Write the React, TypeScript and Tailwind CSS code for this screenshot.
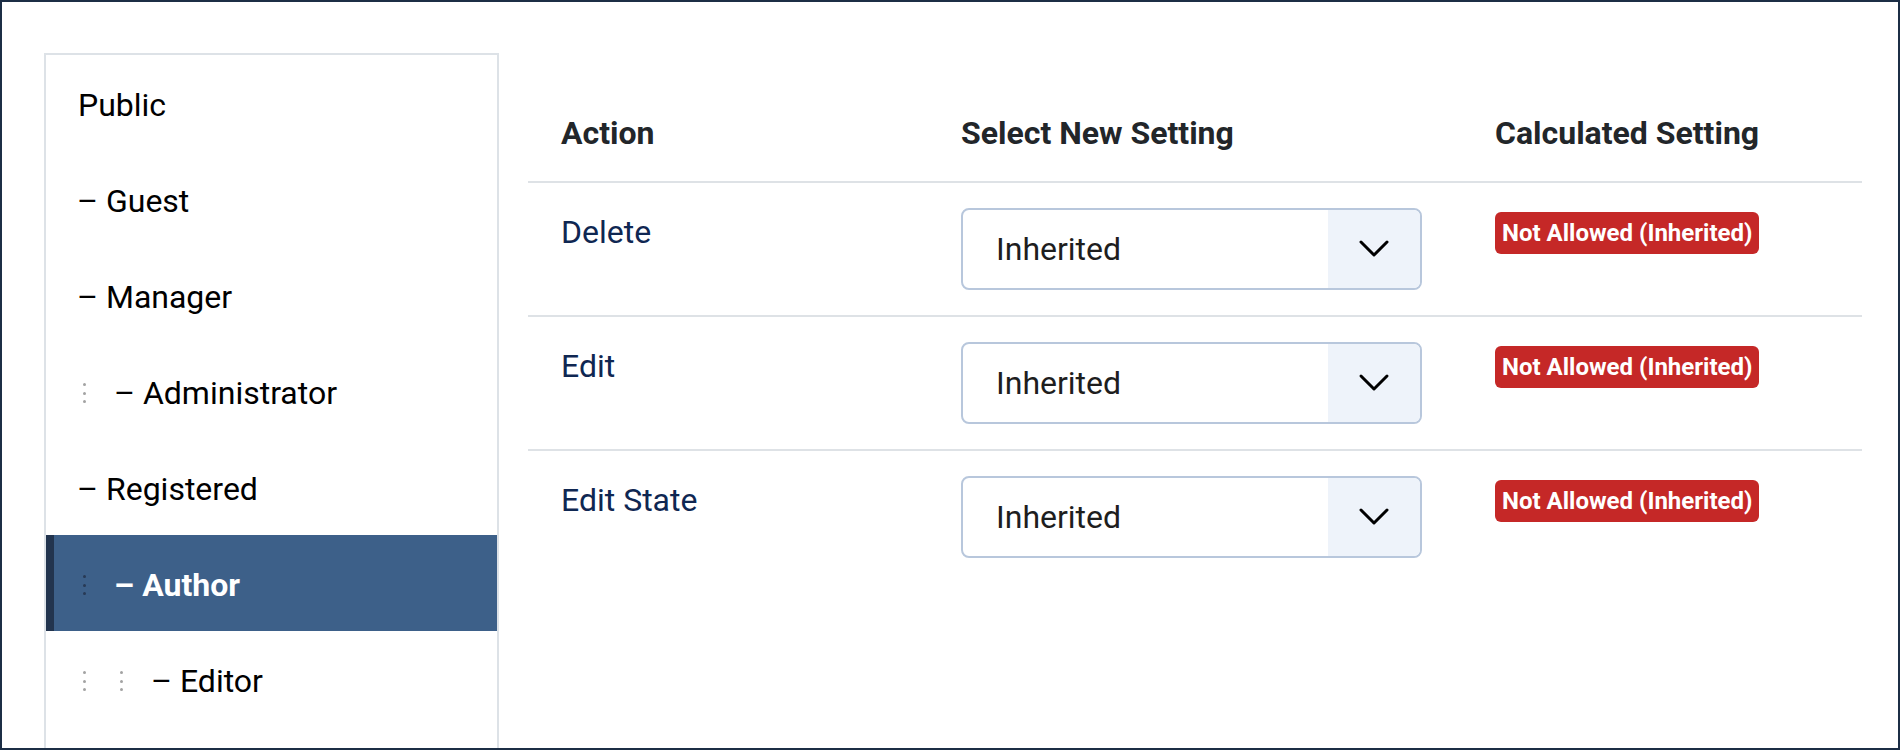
import React from "react";

type Group = { name: string; level: number; active?: boolean };

const GROUPS: Group[] = [
  { name: "Public", level: 0 },
  { name: "Guest", level: 1 },
  { name: "Manager", level: 1 },
  { name: "Administrator", level: 2 },
  { name: "Registered", level: 1 },
  { name: "Author", level: 2, active: true },
  { name: "Editor", level: 3 },
];

const ACTIONS = ["Delete", "Edit", "Edit State"];

function Dots({ active }: { active?: boolean }) {
  const dot = active ? "bg-[#283a55]" : "bg-[#a3a3a3]";
  return (
    <span className="w-[37px] shrink-0 flex items-center">
      <span className="ml-[5px] flex flex-col gap-[5.5px]">
        <span className={`block w-[3px] h-[3px] rounded-full ${dot}`} />
        <span className={`block w-[3px] h-[3px] rounded-full ${dot}`} />
        <span className={`block w-[3px] h-[3px] rounded-full ${dot}`} />
      </span>
    </span>
  );
}

function TreeItem({ group }: { group: Group }) {
  const markers = Math.max(group.level - 1, 0);
  return (
    <li
      className={
        group.active
          ? "relative h-[96px] flex items-center pl-[32px] pt-[4px] bg-[#3d6089] text-white font-bold"
          : "relative h-[96px] flex items-center pl-[32px] pt-[4px] text-black"
      }
    >
      {group.active && (
        <span className="absolute left-0 top-0 bottom-0 w-[8px] bg-[#22344e]" />
      )}
      {Array.from({ length: markers }).map((_, i) => (
        <Dots key={i} active={group.active} />
      ))}
      <span className="text-[32px] leading-[48px] whitespace-pre">
        {group.level > 0 && <span className="-ml-[1px]">– </span>}
        {group.name}
      </span>
    </li>
  );
}

function SelectBox() {
  return (
    <div className="w-[461px] h-[82px] border-2 border-[#b8c7dc] rounded-[8px] flex overflow-hidden bg-white">
      <div className="flex-1 flex items-center pl-[33px] text-[32px] text-[#1e1e1e]">
        Inherited
      </div>
      <div className="w-[92px] bg-[#eef3fa] flex items-center justify-center">
        <svg width="32" height="20" viewBox="0 0 32 20" fill="none">
          <path
            d="M3 3l13 13L29 3"
            stroke="#000"
            strokeWidth="3"
            strokeLinecap="round"
            strokeLinejoin="round"
          />
        </svg>
      </div>
    </div>
  );
}

export default function App() {
  return (
    <div className="w-[1900px] h-[750px] border-2 border-[#1c2e45] bg-white overflow-hidden flex gap-[29px] pl-[42px] pr-[36px] pt-[51px] font-['Roboto',_'Liberation_Sans',_sans-serif]">
      {/* Group tree */}
      <div className="w-[455px] shrink-0 border-2 border-b-0 border-[#dde2e7] h-[760px]">
        <ul>
          {GROUPS.map((g) => (
            <TreeItem key={g.name} group={g} />
          ))}
        </ul>
      </div>

      {/* Permissions table */}
      <div className="flex-1 pt-[32px]">
        <div className="grid grid-cols-[400px_534px_1fr] border-b-2 border-[#dee2e6] text-[32px] leading-[48px] font-bold text-[#22262a]">
          <div className="pl-[33px] pt-[24px] pb-[24px]">Action</div>
          <div className="pl-[33px] pt-[24px] pb-[24px]">Select New Setting</div>
          <div className="pl-[33px] pt-[24px] pb-[24px]">Calculated Setting</div>
        </div>
        {ACTIONS.map((a, i) => (
          <div
            key={a}
            className={
              i < ACTIONS.length - 1
                ? "grid grid-cols-[400px_534px_1fr] border-b-2 border-[#dee2e6]"
                : "grid grid-cols-[400px_534px_1fr]"
            }
          >
            <div className="pl-[33px] py-[25px] text-[32px] leading-[48px] text-[#0f2752]">
              {a}
            </div>
            <div className="pl-[33px] py-[25px]">
              <SelectBox />
            </div>
            <div className="pl-[33px] py-[25px]">
              <span className="inline-block mt-[4px] px-[7px] py-[9px] rounded-[6px] bg-[#c52827] text-white text-[24px] leading-[24px] font-bold">
                Not Allowed (Inherited)
              </span>
            </div>
          </div>
        ))}
      </div>
    </div>
  );
}
